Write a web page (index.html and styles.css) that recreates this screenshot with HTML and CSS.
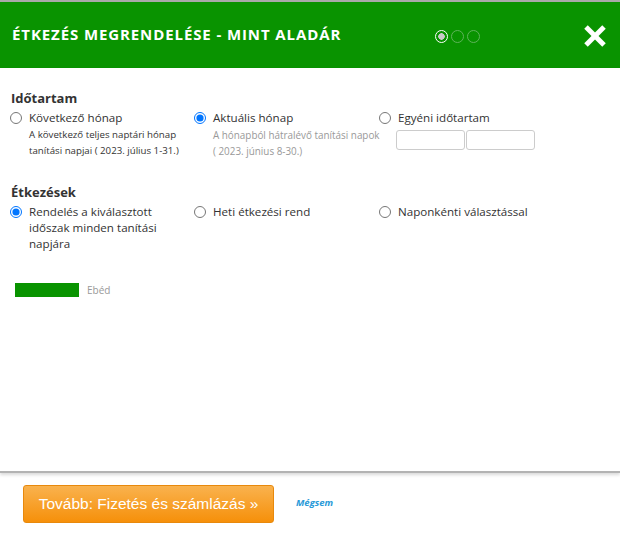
FILE: index.html
```html
<!DOCTYPE html>
<html lang="hu">
<head>
  <meta charset="UTF-8" />
  <title>Étkezés megrendelése</title>
  <link rel="stylesheet" href="styles.css">
</head>
<body>
  <div id="dialog">
    <div id="header">
      <div id="title">Étkezés megrendelése - Mint Aladár</div>
      <div id="steps">
        <span class="step active"></span>
        <span class="step"></span>
        <span class="step"></span>
      </div>
      <svg id="close" width="24" height="24" viewBox="0 0 24 24">
        <line x1="3" y1="3" x2="21" y2="21" stroke="#fff" stroke-width="5"/>
        <line x1="21" y1="3" x2="3" y2="21" stroke="#fff" stroke-width="5"/>
      </svg>
    </div>

    <div id="content">
      <h3>Időtartam</h3>
      <div class="options">
        <div class="option">
          <label><input type="radio" name="period"> Következő hónap</label>
          <p class="hint dark">A következő teljes naptári hónap<br>tanítási napjai ( 2023. július 1-31.)</p>
        </div>
        <div class="option">
          <label><input type="radio" name="period" checked> Aktuális hónap</label>
          <p class="hint">A hónapból hátralévő tanítási napok<br>( 2023. június 8-30.)</p>
        </div>
        <div class="option">
          <label><input type="radio" name="period"> Egyéni időtartam</label>
          <div class="dates">
            <input type="text" class="date">
            <input type="text" class="date">
          </div>
        </div>
      </div>

      <h3 class="second">Étkezések</h3>
      <div class="options">
        <div class="option">
          <label class="wrap"><input type="radio" name="meals" checked> Rendelés a kiválasztott időszak minden tanítási napjára</label>
        </div>
        <div class="option">
          <label><input type="radio" name="meals"> Heti étkezési rend</label>
        </div>
        <div class="option">
          <label><input type="radio" name="meals"> Naponkénti választással</label>
        </div>
      </div>

      <div id="legend">
        <span class="swatch"></span>
        <span class="legend-label">Ebéd</span>
      </div>
    </div>

    <div id="footer">
      <button id="next">Tovább: Fizetés és számlázás »</button>
      <a href="#" id="cancel">Mégsem</a>
    </div>
  </div>
</body>
</html>
```

FILE: styles.css
```css
:root {
  --green: #099300;
  --text: #333;
  --muted: #999;
  --link: #2a9ad8;
}

* { box-sizing: border-box; }

html, body {
  margin: 0;
  padding: 0;
  background: #fff;
  font-family: 'Open Sans', sans-serif;
  color: var(--text);
}

#dialog {
  width: 620px;
  height: 535px;
  border-top: 2px solid #a9a9a9;
  display: flex;
  flex-direction: column;
}

#header {
  height: 66px;
  background: var(--green);
  display: flex;
  align-items: center;
  padding: 0 13px 0 12px;
  color: #fff;
}

#title {
  font-size: 15px;
  font-weight: 700;
  text-transform: uppercase;
  letter-spacing: 0.9px;
  width: 423px;
  margin-top: -3px;
}

#steps {
  display: flex;
  gap: 3px;
  flex: 1;
  padding-top: 2px;
}

.step {
  width: 13px;
  height: 13px;
  border-radius: 50%;
  border: 1.5px solid #5fb35a;
}

.step.active {
  border-color: #fff;
  background: radial-gradient(circle, #c9c9c9 0 3px, var(--green) 3.5px);
}

#close { display: block; margin-top: 1px; }

#content {
  flex: 1;
  padding: 21px 10px 0 10px;
  border-bottom: 2px solid #b3b3b3;
  box-shadow: 0 2px 3px rgba(0,0,0,0.15);
}

h3 {
  margin: 0 0 3px 1px;
  font-size: 13px;
  font-weight: 700;
  line-height: 18px;
}

h3.second { margin-top: 24px; }

.options {
  display: grid;
  grid-template-columns: 184px 185px 185px;
}

label {
  display: block;
  font-size: 11.6px;
  line-height: 16px;
  padding-left: 19px;
  text-indent: -19px;
}

label.wrap { width: 165px; }

input[type=radio] {
  width: 12px;
  height: 12px;
  margin: 0 4px 0 0;
  vertical-align: -2px;
  text-indent: 0;
}

.hint {
  margin: 1px 0 0 19px;
  font-size: 9.9px;
  line-height: 16px;
  color: var(--muted);
  white-space: nowrap;
}

.hint.dark {
  color: #333;
  font-size: 9.7px;
}

.dates {
  display: flex;
  gap: 1px;
  margin: 4px 0 0 17px;
}

.date {
  width: 69px;
  height: 20px;
  border: 1px solid #ccc;
  border-radius: 3px;
  padding: 0;
}

#legend {
  display: flex;
  align-items: center;
  gap: 8px;
  margin: 31px 0 0 5px;
}

.swatch {
  width: 64px;
  height: 14px;
  background: var(--green);
}

.legend-label {
  font-size: 10px;
  color: var(--muted);
}

#footer {
  height: 62px;
  display: flex;
  align-items: flex-start;
  padding: 12px 0 0 23px;
}

#next {
  width: 251px;
  height: 38px;
  border: 1px solid #e8890c;
  border-radius: 3px;
  background: linear-gradient(#f9b24e, #f6900a);
  color: #fff;
  font-family: 'Liberation Sans', Arial, sans-serif;
  font-size: 15.5px;
  cursor: pointer;
}

#cancel {
  margin: 11px 0 0 22px;
  font-size: 9.5px;
  font-weight: 700;
  font-style: italic;
  color: var(--link);
  text-decoration: none;
}
```
